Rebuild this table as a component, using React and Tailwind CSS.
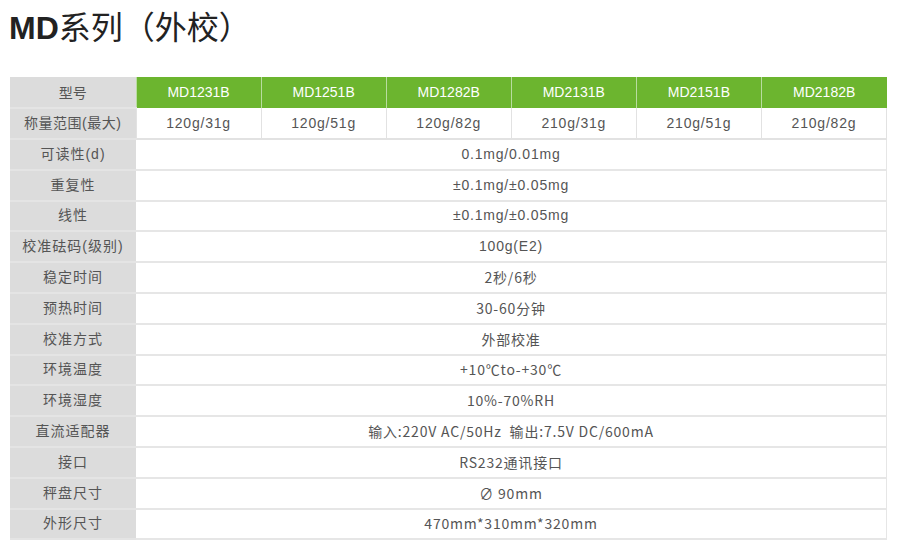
import React from "react";

const models = ["MD1231B", "MD1251B", "MD1282B", "MD2131B", "MD2151B", "MD2182B"];
const ranges = ["120g/31g", "120g/51g", "120g/82g", "210g/31g", "210g/51g", "210g/82g"];

const rows = [
  ["可读性(d)", "0.1mg/0.01mg", true],
  ["重复性", "±0.1mg/±0.05mg", true],
  ["线性", "±0.1mg/±0.05mg", true],
  ["校准砝码(级别)", "100g(E2)", true],
  ["稳定时间", "2秒/6秒"],
  ["预热时间", "30-60分钟"],
  ["校准方式", "外部校准"],
  ["环境温度", "+10℃to-+30℃"],
  ["环境湿度", "10%-70%RH"],
  ["直流适配器", "输入:220V AC/50Hz  输出:7.5V DC/600mA"],
  ["接口", "RS232通讯接口"],
  ["秤盘尺寸", "∅ 90mm"],
  ["外形尺寸", "470mm*310mm*320mm"],
];

const App = () => {
  return (
    <div className="w-[900px] h-[554px] bg-white overflow-hidden">
      <h1
        className="pl-[9px] pt-[6px] text-[32px] leading-[38px] text-[#222]"
        style={{ fontFamily: '"Noto Sans CJK SC", sans-serif' }}
      >
        <span className="font-bold" style={{ fontFamily: '"Liberation Sans", sans-serif' }}>MD</span>
        系列（外校）
      </h1>

      <table
        className="ml-[10px] mt-[30px] w-[877px] table-fixed border-collapse text-[14px]"
        style={{ fontFamily: '"Liberation Sans", "Noto Sans CJK SC", sans-serif' }}
      >
        <colgroup>
          <col className="w-[126px]" />
          {models.map((m) => (
            <col key={m} />
          ))}
        </colgroup>
        <tbody>
          <tr className="h-[31px]">
            <td className="bg-[#dcdcdc] text-center text-[#555] border-b-2 border-[#e4e4e4]" style={{ fontFamily: '"Noto Sans CJK SC", sans-serif' }}>
              型号
            </td>
            {models.map((m) => (
              <td key={m} className="bg-[#6cb52f] text-white text-center border-l border-[#b9dca0]">
                {m}
              </td>
            ))}
          </tr>
          <tr className="h-[31px]">
            <td className="bg-[#dcdcdc] text-center text-[#555] border-b-2 border-[#e4e4e4] tracking-[0.5px]">
              称量范围(最大)
            </td>
            {ranges.map((r) => (
              <td key={r} className="text-center text-[#555] border-l border-r border-b-2 border-[#e2e2e2] tracking-[0.8px]">
                {r}
              </td>
            ))}
          </tr>
          {rows.map(([label, value, arial]) => (
            <tr key={label} className="h-[30.8px]">
              <td className="bg-[#dcdcdc] text-center text-[#555] border-b-2 border-[#e4e4e4] tracking-[1px]">
                {label}
              </td>
              <td
                colSpan={6}
                className="text-center text-[#555] border-r border-b-2 border-[#e6e6e6] tracking-[0.8px] whitespace-pre"
                style={arial ? undefined : { fontFamily: '"Noto Sans CJK SC", sans-serif' }}
              >
                {value}
              </td>
            </tr>
          ))}
        </tbody>
      </table>
    </div>
  );
};

export default App;
